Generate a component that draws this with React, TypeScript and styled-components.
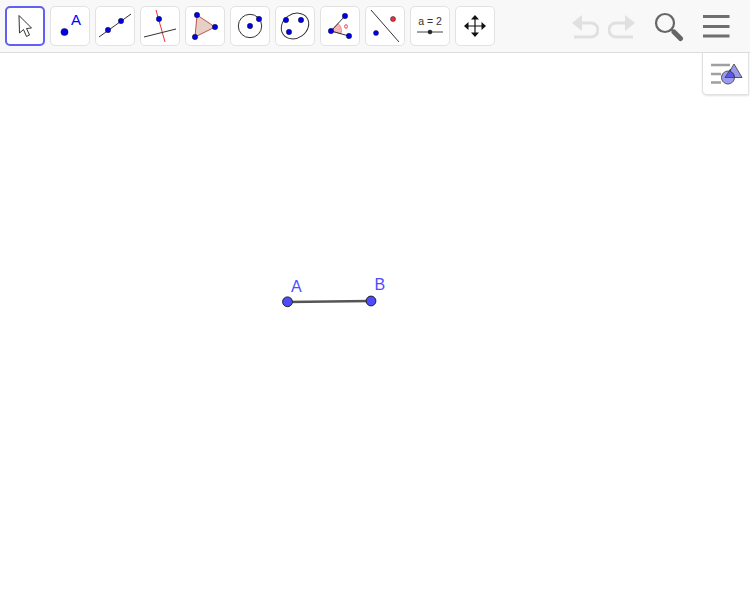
import React from "react";
import styled, { createGlobalStyle } from "styled-components";

const Global = createGlobalStyle`
  html, body { margin: 0; padding: 0; background: #fff; }
  body { font-family: "Liberation Sans", Arial, sans-serif; overflow: hidden; }
`;

const Page = styled.div`
  width: 750px;
  height: 600px;
  display: flex;
  flex-direction: column;
  position: relative;
  overflow: hidden;
`;

const Toolbar = styled.header`
  height: 52px;
  flex: none;
  display: flex;
  align-items: flex-start;
  justify-content: space-between;
  background: #f8f8f8;
  border-bottom: 1px solid #dcdcdc;
`;

const ToolGroup = styled.div`
  display: flex;
  gap: 5px;
  padding: 6px 0 0 5px;
`;

const ToolButton = styled.button<{ $active?: boolean }>`
  width: 40px;
  height: 40px;
  padding: 0;
  box-sizing: border-box;
  background: #fff;
  position: relative;
  border-radius: 5px;
  border: 1px solid #e2e2e2;
  display: block;
  ${(p) => p.$active && "outline: 2px solid #6060f5; outline-offset: -2px;"}
  svg { position: absolute; left: -1px; top: -1px; display: block; }
`;

const ActionGroup = styled.div`
  display: flex;
  align-items: flex-start;
  padding: 12px 20px 0 0;
`;

const IconButton = styled.div<{ $ml: number; $mt?: number }>`
  margin-left: ${(p) => p.$ml}px;
  margin-top: ${(p) => p.$mt ?? 0}px;
  svg { display: block; }
`;

const Graphics = styled.main`
  flex: 1;
  position: relative;
  background: #fff;
`;

const Canvas = styled.svg`
  position: absolute;
  inset: 0;
  display: block;
`;

const StyleButton = styled.div`
  position: absolute;
  right: 1px;
  top: 0;
  width: 47px;
  height: 42px;
  box-sizing: border-box;
  background: #fff;
  border: 1px solid #e2e2e2;
  border-top: none;
  border-radius: 0 0 0 5px;
  box-shadow: 0 1px 2px rgba(0, 0, 0, 0.12);
  svg { display: block; margin-left: -1px; }
`;

const BLUE = "#0000e6";
const Icon = ({ children }: { children: React.ReactNode }) => (
  <svg width="40" height="40" viewBox="0 0 40 40">{children}</svg>
);
const Dot = ({ x, y, r = 2.7, fill = BLUE }: { x: number; y: number; r?: number; fill?: string }) => (
  <circle cx={x} cy={y} r={r} fill={fill} stroke="#10103a" strokeWidth="0.5" />
);
const Ln = ({ d, c = "#333", w = 1 }: { d: string; c?: string; w?: number }) => (
  <path d={d} stroke={c} strokeWidth={w} fill="none" />
);

const icons: React.ReactNode[] = [
  <Icon key="0">
    <path d="M14 9.5 L14.5 27 L18.5 23.5 L21.5 30.5 L24.5 29 L21.5 22.5 L26.5 22 Z" fill="#fff" stroke="#333" strokeWidth="1" strokeLinejoin="round" />
  </Icon>,
  <Icon key="1">
    <Dot x={14.5} y={26} r={3.6} />
    <text x={26} y={19} fontSize="15" fill="#0000ff" textAnchor="middle" fontFamily="'Liberation Sans', sans-serif">A</text>
  </Icon>,
  <Icon key="2">
    <Ln d="M4 31 L36 8" />
    <Dot x={13} y={24} />
    <Dot x={26} y={15} />
  </Icon>,
  <Icon key="3">
    <Ln d="M16 4 L25 36" c="#f03030" />
    <Ln d="M4 31 L36 23" />
    <Dot x={19} y={13} />
  </Icon>,
  <Icon key="4">
    <path d="M12 9 L30 21 L10 31 Z" fill="#e8cfc6" stroke="#b8554d" strokeWidth="1" />
    <Dot x={12} y={9} />
    <Dot x={30} y={21} />
    <Dot x={10} y={31} />
  </Icon>,
  <Icon key="5">
    <circle cx="20" cy="20" r="11.7" fill="none" stroke="#333" strokeWidth="1" />
    <Dot x={20} y={20} />
    <Dot x={29} y={13} />
  </Icon>,
  <Icon key="6">
    <ellipse cx="20" cy="20" rx="14.5" ry="12" transform="rotate(-35 20 20)" fill="none" stroke="#333" strokeWidth="1" />
    <Dot x={11} y={14} />
    <Dot x={26} y={14} />
    <Dot x={14} y={26} />
  </Icon>,
  <Icon key="7">
    <path d="M11 25 L18 17.5 A10 10 0 0 1 21 27.8 Z" fill="#f4b8b8" stroke="#e07070" strokeWidth="0.7" />
    <Ln d="M25 10 L11 25 L29 30" />
    <ellipse cx="26" cy="20.5" rx="1.4" ry="1.8" fill="none" stroke="#f03030" strokeWidth="0.9" />
    <Dot x={25} y={10} />
    <Dot x={11} y={25} />
    <Dot x={29} y={30} />
  </Icon>,
  <Icon key="8">
    <Ln d="M6 4 L34 36" />
    <Dot x={11} y={27} r={2.5} />
    <Dot x={28} y={13} r={2.5} fill="#f03030" />
  </Icon>,
  <Icon key="9">
    <text x={20} y={19} fontSize="10.5" fill="#333" textAnchor="middle" fontFamily="'Liberation Sans', sans-serif">a = 2</text>
    <Ln d="M7 26 L33 26" c="#444" />
    <Dot x={20} y={26} r={2} fill="#222" />
  </Icon>,
  <Icon key="10">
    <Ln d="M20 10 L20 30 M10 20 L30 20" c="#111" w={1.2} />
    <path d="M20 9 L16 13.5 L24 13.5 Z M20 31 L16 26.5 L24 26.5 Z M9 20 L13.5 16 L13.5 24 Z M31 20 L26.5 16 L26.5 24 Z" fill="#111" />
  </Icon>,
];

const UndoIcon = ({ flip }: { flip?: boolean }) => (
  <svg width="28" height="24" viewBox="0 0 28 24" style={flip ? { transform: "scaleX(-1)" } : undefined}>
    <path d="M1 8 L11 0 L11 16 Z" fill="#e0e0e0" />
    <path d="M9 8 H20 A7 7 0 0 1 20 22 H3" fill="none" stroke="#e0e0e0" strokeWidth="3" />
  </svg>
);

export default function App() {
  return (
    <Page>
      <Global />
      <Toolbar>
        <ToolGroup>
          {icons.map((icon, i) => (
            <ToolButton key={i} $active={i === 0}>{icon}</ToolButton>
          ))}
        </ToolGroup>
        <ActionGroup>
          <IconButton $ml={0} $mt={3}><UndoIcon /></IconButton>
          <IconButton $ml={9} $mt={3}><UndoIcon flip /></IconButton>
          <IconButton $ml={18}>
            <svg width="30" height="30" viewBox="0 0 30 30">
              <circle cx="11" cy="11" r="9" fill="none" stroke="#666" strokeWidth="2.2" />
              <path d="M17.5 17.5 L20 20" stroke="#666" strokeWidth="2" />
              <path d="M20 20 L26.5 26.5" stroke="#666" strokeWidth="5" strokeLinecap="round" />
            </svg>
          </IconButton>
          <IconButton $ml={18}>
            <svg width="28" height="28" viewBox="0 0 28 28">
              <path d="M1 4.5 H27.5 M1 14.5 H27.5 M1 24 H27.5" stroke="#6e6e6e" strokeWidth="3" />
            </svg>
          </IconButton>
        </ActionGroup>
      </Toolbar>
      <Graphics>
        <Canvas width="750" height="547" viewBox="0 53 750 547">
          <line x1="287" y1="302" x2="371" y2="301" stroke="#555" strokeWidth="2.6" />
          <circle cx="287.5" cy="301.8" r="4.9" fill="#4d4dff" stroke="#222" strokeWidth="1" />
          <circle cx="371" cy="301" r="4.9" fill="#4d4dff" stroke="#222" strokeWidth="1" />
          <text x="291" y="292" fontSize="16" fill="#4d4dff" fontFamily="'Liberation Sans', sans-serif">A</text>
          <text x="374.5" y="290" fontSize="16" fill="#4d4dff" fontFamily="'Liberation Sans', sans-serif">B</text>
        </Canvas>
        <StyleButton>
          <svg width="47" height="42" viewBox="0 0 47 42">
            <path d="M9 12 H28 M9 21 H19 M9 29.5 H19" stroke="#a0a0a0" strokeWidth="2.4" />
            <path d="M32 11 L40 24.5 L24 24.5 Z" fill="#9a9af0" stroke="#555" strokeWidth="1" />
            <circle cx="26" cy="24.5" r="6.5" fill="#9a9af0" stroke="#555" strokeWidth="1" />
            <path d="M28.5 16 L23 24.5 L32.5 24.5 A6.5 6.5 0 0 0 28.5 18.5 Z" fill="#5a5ae8" stroke="#333" strokeWidth="0.7" />
          </svg>
        </StyleButton>
      </Graphics>
    </Page>
  );
}
